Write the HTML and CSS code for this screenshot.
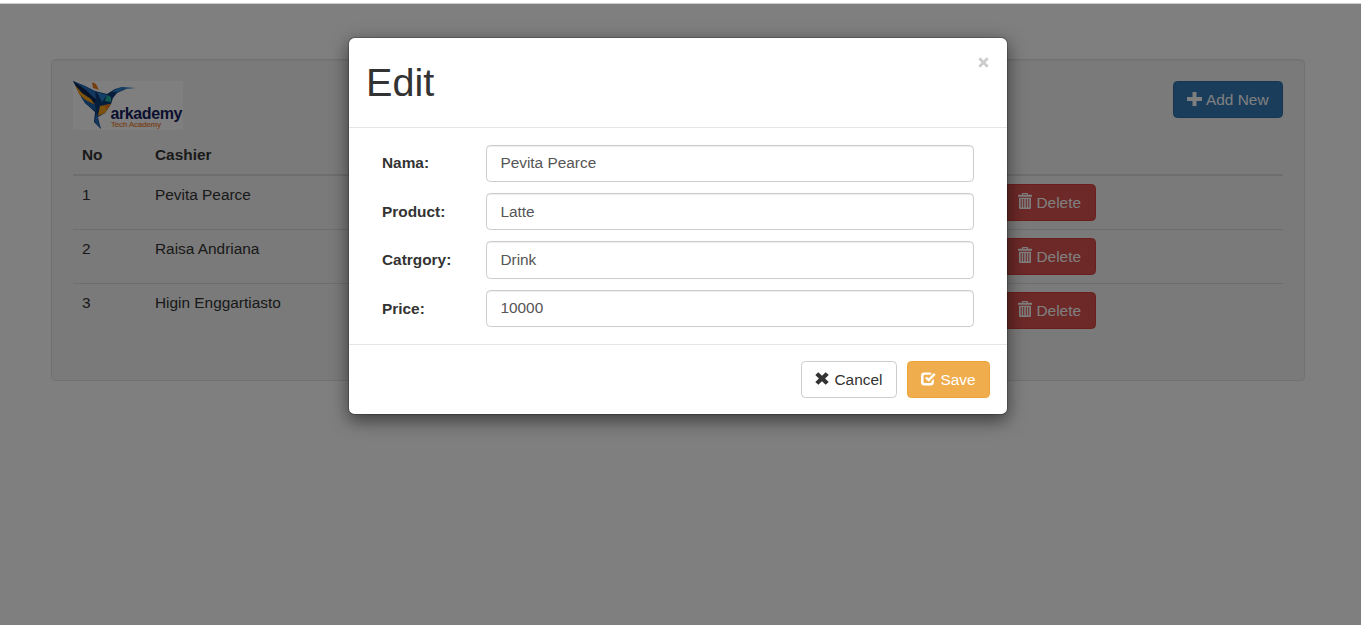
FILE: index.html
```html
<!DOCTYPE html>
<html lang="en">
<head>
<meta charset="utf-8">
<title>Arkademy</title>
<link rel="stylesheet" href="styles.css">
</head>
<body>
<svg class="defs" width="0" height="0">
  <symbol id="trash" viewBox="0 0 14 16"><path fill-rule="evenodd" d="M4 1.800V1q0-1 1-1h4q1 0 1 1v.8h3.500q.5 0 .5.6V3.800H0V2.400q0-.6.5-.6zM5.200 1.800h3.600V1H5.200zM1 4.800h12v10q0 1.200-1.200 1.200H2.200Q1 16 1 14.800zM2.700 6v8.400h1V6zM5.200 6v8.400h1V6zM7.800 6v8.400h1V6zM10.300 6v8.400h1V6z"/></symbol>
</svg>
<main class="page">
  <section class="well">
    <header class="well-head">
      <svg class="logo" viewBox="0 0 110 49">
        <rect width="110" height="49" fill="#fff"/>
        <path fill="#0f3a78" d="M0 0 12 5 22 10 34 13 42 8 50 6 53 8 44 12 40 17 38 23 32 32 25 36 26 41 28 48 21 41 22 31 12 22 7 14z"/>
        <path fill="#2670bb" d="M0 0 12 5 22 10 23 18 13 11z"/>
        <path fill="#0a2450" d="M0 0 13 9 23 19 20 23 10 14z"/>
        <path fill="#f9a51a" d="M2 4 9 12 18 18 22 24 12 19 6 13z"/>
        <path fill="#1b62ae" d="M8 16 14 20 22 24 23 30 13 23z"/>
        <path fill="#ef7d1a" d="M19 1 23 3 26 9 20 7z"/>
        <path fill="#2b83cc" d="M24 11 34 14 29 21z"/>
        <path fill="#25b5a0" d="M34 14 38 16 38 21 32 20z"/>
        <path fill="#2b83cc" d="M39 11 45 7 50 6 63 7 52 8 45 11z"/>
        <path fill="#f9a51a" d="M27 25 38 23 32 32 25 35z"/>
        <path fill="#ef7d1a" d="M31 24 38 23 34 29z"/>
        <path fill="#2670bb" d="M23 32 25 36 25 41 28 48 22 41z"/>
        <text class="logo-name" x="37.500" y="38" textLength="72">arkademy</text>
        <text class="logo-tag" x="38" y="46" textLength="50">Tech Academy</text>
      </svg>
      <button class="btn primary add"><svg class="icon plus" viewBox="0 0 15 14"><path d="M5.500 0h4v5h5.500v4H9.500v5h-4V9H0V5h5.500z"/></svg>Add New</button>
    </header>
    <table class="table">
      <thead><tr><th class="no">No</th><th>Cashier</th><th class="action"></th></tr></thead>
      <tbody>
        <tr><td>1</td><td>Pevita Pearce</td><td><button class="btn danger"><svg class="icon trash"><use href="#trash"/></svg>Delete</button></td></tr>
        <tr><td>2</td><td>Raisa Andriana</td><td><button class="btn danger"><svg class="icon trash"><use href="#trash"/></svg>Delete</button></td></tr>
        <tr><td>3</td><td>Higin Enggartiasto</td><td><button class="btn danger"><svg class="icon trash"><use href="#trash"/></svg>Delete</button></td></tr>
      </tbody>
    </table>
  </section>
</main>
<div class="backdrop">
  <form class="modal">
    <header class="modal-head">
      <h1>Edit</h1>
      <svg class="close" viewBox="0 0 10 10"><path d="M1.200 1.200 8.800 8.800M8.800 1.200 1.200 8.800"/></svg>
    </header>
    <div class="modal-body">
      <label class="field"><span>Nama:</span><input type="text" value="Pevita Pearce"></label>
      <label class="field"><span>Product:</span><input type="text" value="Latte"></label>
      <label class="field"><span>Catrgory:</span><input type="text" value="Drink"></label>
      <label class="field"><span>Price:</span><input type="text" value="10000"></label>
    </div>
    <footer class="modal-foot">
      <button type="button" class="btn default"><svg class="icon remove" viewBox="0 0 14 13"><path d="M3.300.300 7 3.800 10.700.300 13.700 3.100 10.100 6.500 13.700 9.900 10.700 12.700 7 9.200 3.300 12.700.300 9.900 3.900 6.500.300 3.100z"/></svg>Cancel</button>
      <button type="button" class="btn warning"><svg class="icon check" viewBox="0 0 16 14"><path d="M3.500 0H10L11.500 1.200 10.200 2.500H4Q2.700 2.500 2.700 3.800V10Q2.700 11.300 4 11.300H10Q11.300 11.300 11.300 10V9L13.700 6.800V10.500Q13.700 14 10.200 14H3.500Q0 14 0 10.500V3.500Q0 0 3.500 0zM13.800.700 15.600 2.500 8.200 9.900 4.400 6.100 6 4.500 8.200 6.300z"/></svg>Save</button>
    </footer>
  </form>
</div>
</body>
</html>
```
FILE: styles.css
```css
* { box-sizing: border-box; }
body {
  margin: 0;
  height: 625px;
  overflow: hidden;
  border-top: 3px solid #fff;
  background: #fff;
  color: #333;
  font: 15.4px/22px "Liberation Sans", Arial, sans-serif;
}
.defs { position: absolute; }
.page { padding: 55px 56px 0 51px; border-top: 1px solid #ccc; }
.well {
  height: 322px;
  padding: 21px;
  border: 1px solid #e3e3e3;
  border-radius: 4.4px;
  background: #f5f5f5;
  box-shadow: inset 0 1px 1px rgba(0, 0, 0, .05);
}
.well-head {
  display: flex;
  justify-content: space-between;
  align-items: flex-start;
  height: 53px;
}
.logo { width: 110px; height: 49px; }
.logo-name { font: bold 16px "Liberation Sans", Arial, sans-serif; fill: #15205e; }
.logo-tag { font: 7.7px "Liberation Sans", Arial, sans-serif; fill: #ef8432; stroke: #ef8432; stroke-width: .2px; }
.table { width: 100%; border-collapse: separate; border-spacing: 0; table-layout: fixed; }
.table th { height: 42px; padding: 10px 9px 8px; text-align: left; border-bottom: 2px solid #ddd; }
.table td { height: 53px; padding: 8px 9px; vertical-align: top; }
.table tr + tr td { height: 54px; border-top: 1px solid #ddd; }
.table .no { width: 73px; }
.table .action { width: 289px; }
.btn {
  display: inline-flex;
  vertical-align: top;
  align-items: center;
  height: 37px;
  padding: 0 13.5px;
  border: 1px solid;
  border-radius: 4.4px;
  font: inherit;
  white-space: nowrap;
}
.icon { flex: none; fill: currentColor; margin-right: 4px; }
.plus { width: 15px; height: 14px; margin-top: -1px; }
.trash { width: 14px; height: 16px; margin: -3px 5px 0 0; }
.remove { width: 14px; height: 13px; margin: -2px 5px 0 0; }
.check { width: 15px; height: 14px; margin-top: -2px; }
.primary { background: #337ab7; border-color: #2e6da4; color: #fff; }
.danger { background: #d9534f; border-color: #d43f3a; color: #fff; }
.warning { background: #f0ad4e; border-color: #eea236; color: #fff; }
.default { background: #fff; border-color: #ccc; color: #333; }
.backdrop {
  position: absolute;
  inset: 4px 0 0;
  display: flex;
  justify-content: center;
  align-items: flex-start;
  padding: 33px 5px 0 0;
  background: rgba(0, 0, 0, .5);
}
.modal {
  width: 660px;
  height: 378px;
  border: 1px solid rgba(0, 0, 0, .2);
  border-radius: 6.6px;
  background: #fff;
  background-clip: padding-box;
  box-shadow: 0 5.5px 16.5px rgba(0, 0, 0, .5);
}
.modal-head {
  display: flex;
  justify-content: space-between;
  height: 90px;
  padding: 22px 18px 0 17px;
  border-bottom: 1px solid #e5e5e5;
}
.modal-head h1 { margin: 0; font-size: 39.6px; line-height: 44px; font-weight: 400; }
.close { width: 11px; height: 11px; margin-top: -3px; stroke: #ccc; stroke-width: 2.6; }
.modal-body {
  display: grid;
  row-gap: 11px;
  padding: 16.6px 33px 0;
  height: 216px;
  align-content: start;
}
.field { display: grid; grid-template-columns: 104px 488px; height: 37.4px; }
.field span { padding-top: 7.75px; font-weight: bold; }
.field input {
  height: 37.4px;
  padding: 0 13.4px;
  border: 1px solid #ccc;
  border-radius: 4.4px;
  color: #555;
  font: inherit;
  box-shadow: inset 0 1px 1px rgba(0, 0, 0, .075);
}
.modal-foot {
  display: flex;
  justify-content: flex-end;
  gap: 10px;
  padding: 16px 17px 0;
  border-top: 1px solid #e5e5e5;
}
```
